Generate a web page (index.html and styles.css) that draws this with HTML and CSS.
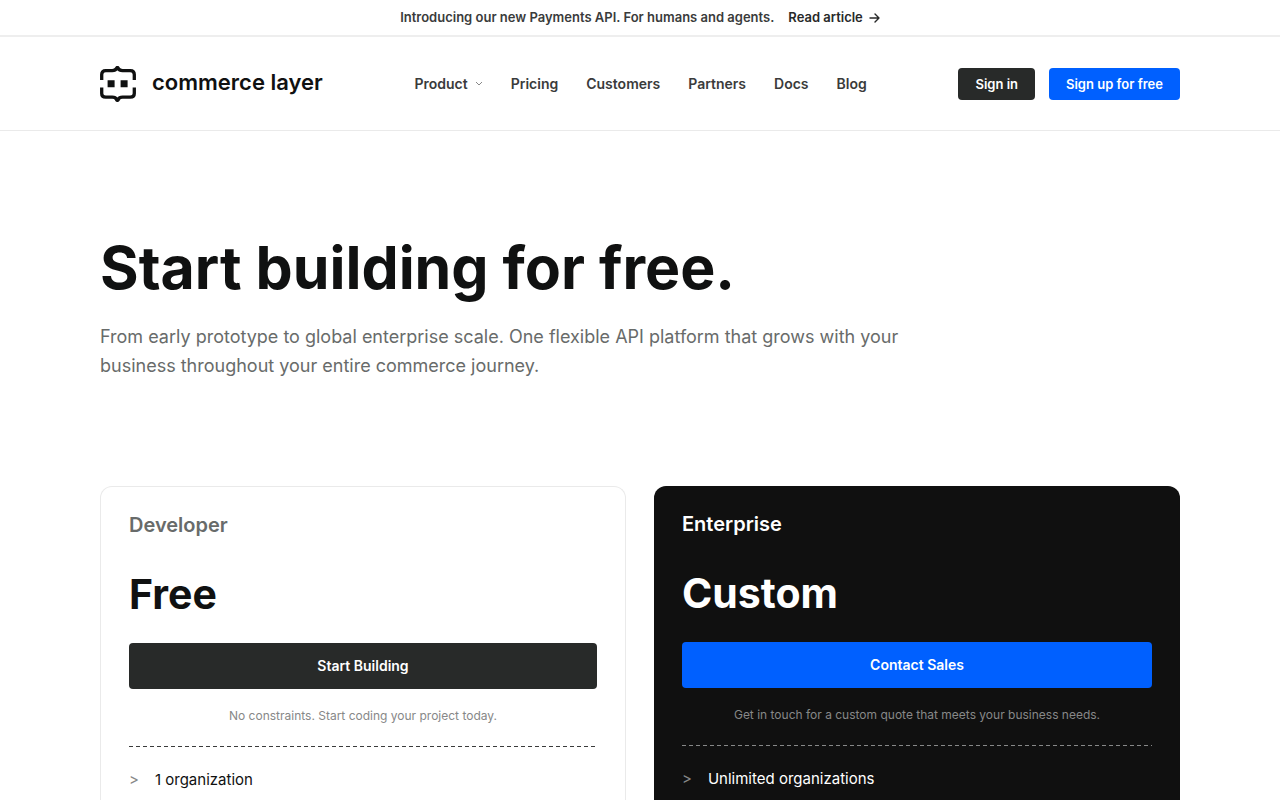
FILE: index.html
```html
<!DOCTYPE html>
<html lang="en">
<head>
<meta charset="utf-8">
<meta name="viewport" content="width=device-width, initial-scale=1">
<title>Pricing | Commerce Layer</title>
<link rel="stylesheet" href="styles.css">
</head>
<body>
<aside class="announcement">
  <span>Introducing our new Payments API. For humans and agents.</span>
  <a class="announcement-link" href="#article">Read article
    <svg width="11" height="10" viewBox="0 0 11 10" fill="none" stroke="currentColor" stroke-width="1.4" stroke-linecap="round" stroke-linejoin="round" aria-hidden="true"><path d="M1 5h9M6 1l4 4-4 4"/></svg>
  </a>
</aside>
<header class="site-header">
  <div class="container header-row">
    <a class="logo" href="#home">
      <svg width="36" height="36" viewBox="0 0 36 36" fill="none" aria-hidden="true">
        <path d="M1.7 14V8.6Q1.7 4.6 5.7 4.6H12.2Q15.6 4.6 16.4 2.4Q17.4 .4 18.4 2.4Q19.2 4.6 22.6 4.6H30.3Q34.3 4.6 34.3 8.6V14M1.7 21.6V27.4Q1.7 31.2 5.7 31.2H12.2Q15.6 31.2 16.4 33.4Q17.4 35.4 18.4 33.4Q19.2 31.2 22.6 31.2H30.3Q34.3 31.2 34.3 27.4V21.6" stroke="currentColor" stroke-width="3.3"/>
        <path d="M7.6 14.2h7v7h-7zM20.6 14.2h7v7h-7z" fill="currentColor"/>
      </svg>
      <span class="wordmark">commerce layer</span>
    </a>
    <nav class="main-nav" aria-label="Main">
      <button class="nav-item" type="button">Product
        <svg width="8" height="6" viewBox="0 0 8 6" fill="none" stroke="#888" aria-hidden="true"><path d="M1 1l3 3 3-3"/></svg>
      </button>
      <a class="nav-item" href="#pricing">Pricing</a>
      <a class="nav-item" href="#customers">Customers</a>
      <a class="nav-item" href="#partners">Partners</a>
      <a class="nav-item" href="#docs">Docs</a>
      <a class="nav-item" href="#blog">Blog</a>
    </nav>
    <div class="account">
      <a class="button button-small button-dark" href="#signin">Sign in</a>
      <a class="button button-small button-blue" href="#signup">Sign up for free</a>
    </div>
  </div>
</header>
<main class="container">
  <section class="hero">
    <h1>Start building for free.</h1>
    <p>From early prototype to global enterprise scale. One flexible API platform that grows with your business throughout your entire commerce journey.</p>
  </section>
  <section class="plans" id="pricing">
    <article class="plan plan-developer">
      <h2>Developer</h2>
      <p class="price">Free</p>
      <a class="button button-large button-dark" href="#start">Start Building</a>
      <p class="note">No constraints. Start coding your project today.</p>
      <ul class="features">
        <li>1 organization</li>
      </ul>
    </article>
    <article class="plan plan-enterprise">
      <h2>Enterprise</h2>
      <p class="price">Custom</p>
      <a class="button button-large button-blue" href="#contact">Contact Sales</a>
      <p class="note">Get in touch for a custom quote that meets your business needs.</p>
      <ul class="features">
        <li>Unlimited organizations</li>
      </ul>
    </article>
  </section>
</main>
</body>
</html>
```
FILE: styles.css
```css
*,
*::before,
*::after {
  box-sizing: border-box;
}

body {
  display: flex;
  flex-direction: column;
  min-height: 100vh;
  margin: 0;
  background: #fff;
  color: #101111;
  font-family: Inter, "Liberation Sans", sans-serif;
}

h1, h2, p, ul {
  margin: 0;
}

a {
  color: inherit;
  text-decoration: none;
}

.container {
  width: 100%;
  max-width: 1128px;
  margin: 0 auto;
  padding: 0 24px;
}

.announcement {
  display: flex;
  flex-wrap: wrap;
  justify-content: center;
  gap: 0 14px;
  padding: 8px 16px;
  border-bottom: 2px solid #eee;
  color: #3a3b3b;
  font-size: 13px;
  font-weight: 600;
  line-height: 19px;
}

.announcement-link {
  display: flex;
  align-items: center;
  gap: 6px;
  color: #282929;
}

.site-header {
  border-bottom: 1px solid #eaeaea;
}

.header-row {
  display: flex;
  align-items: center;
  justify-content: space-between;
  min-height: 93px;
}

.logo {
  display: flex;
  align-items: center;
  gap: 16px;
  color: #101111;
}

.wordmark {
  padding-bottom: 4px;
  font-size: 22px;
  font-weight: 600;
  line-height: 28px;
}

.main-nav {
  display: flex;
  gap: 28px;
}

.nav-item {
  display: flex;
  align-items: center;
  gap: 7px;
  padding: 0;
  border: 0;
  background: none;
  color: #3a3b3b;
  font: 600 14px/20px Inter, "Liberation Sans", sans-serif;
}

.account {
  display: flex;
  gap: 14px;
}

.button {
  display: block;
  border-radius: 4px;
  color: #fff;
  font-weight: 600;
  text-align: center;
}

.button-small {
  padding: 6px 17px;
  font-size: 13px;
  line-height: 20px;
}

.button-large {
  padding: 13px 16px;
  font-size: 14px;
  line-height: 20px;
}

.button-dark {
  background: #282a29;
}

.button-blue {
  background: #0060ff;
}

main.container {
  display: flex;
  flex: 1;
  flex-direction: column;
}

.hero {
  padding: 107px 0 106px;
}

h1 {
  font-size: 59px;
  font-weight: 700;
  line-height: 60px;
}

.hero p {
  max-width: 820px;
  margin-top: 24px;
  color: #686b6a;
  font-size: 18px;
  line-height: 29px;
}

.plans {
  display: grid;
  flex: 1;
  grid-template-columns: 1fr 1fr;
  gap: 28px;
}

.plan {
  padding: 28px 28px 8px;
  border-radius: 12px 12px 0 0;
}

.plan-developer {
  border: 1px solid #eaeaea;
  border-bottom: 0;
}

.plan-enterprise {
  background: #101010;
  color: #fff;
}

h2 {
  font-size: 20px;
  font-weight: 600;
  line-height: 20px;
}

.plan-developer h2 {
  color: #686b6a;
}

.price {
  margin: 36px 0 26px;
  font-size: 41px;
  font-weight: 700;
  line-height: 46px;
}

.note {
  padding: 17px 0 20px;
  color: #878888;
  font-size: 12px;
  line-height: 20px;
  text-align: center;
}

.features {
  padding: 24px 0 0;
  background: repeating-linear-gradient(90deg, #3a3b3b 0 4px, transparent 4px 7px) top / 100% 1px no-repeat;
  font-size: 15px;
  line-height: 20px;
  list-style: none;
}

.plan-enterprise .features {
  background-image: repeating-linear-gradient(90deg, #878888 0 4px, transparent 4px 7px);
}

.features li {
  display: flex;
  gap: 16px;
}

.features li::before {
  color: #878888;
  content: ">";
}
```
